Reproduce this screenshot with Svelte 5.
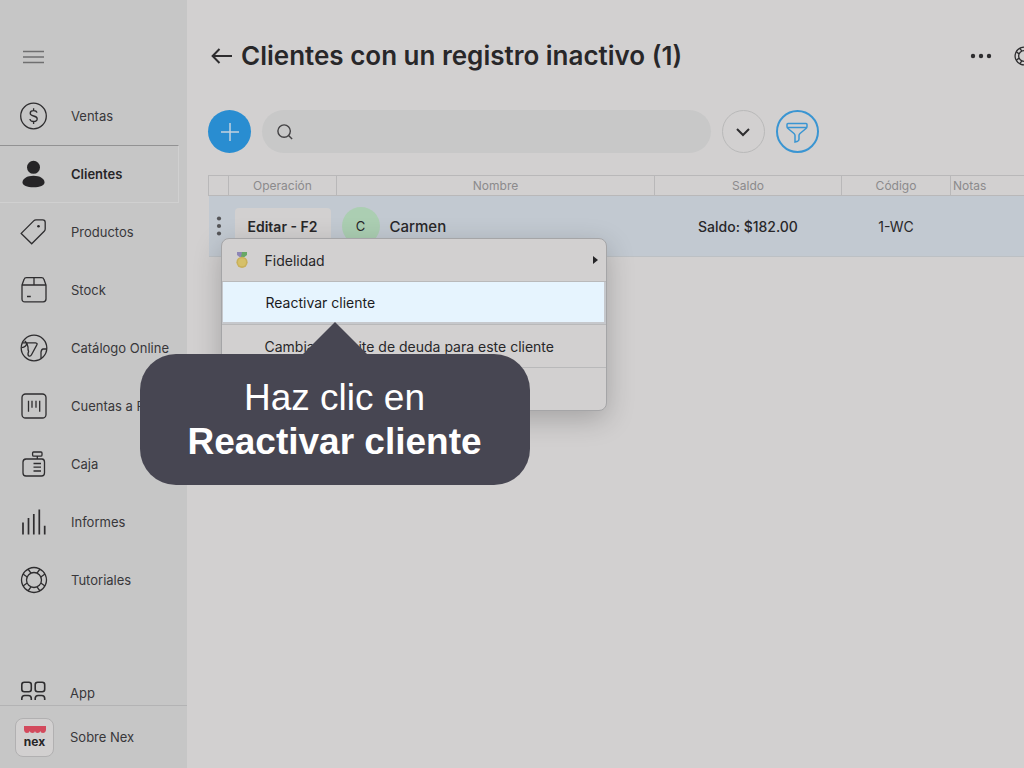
<script lang="ts">
  type Item = { id: string; label: string };

  const items: Item[] = [
    { id: 'ventas', label: 'Ventas' },
    { id: 'clientes', label: 'Clientes' },
    { id: 'productos', label: 'Productos' },
    { id: 'stock', label: 'Stock' },
    { id: 'catalogo', label: 'Catálogo Online' },
    { id: 'cuentas', label: 'Cuentas a Pagar' },
    { id: 'caja', label: 'Caja' },
    { id: 'informes', label: 'Informes' },
    { id: 'tutoriales', label: 'Tutoriales' }
  ];

  let active = $state('clientes');
  let search = $state('');
</script>

{#snippet ring()}
  <circle cx="14" cy="14" r="7.5" />
  <path d="M9 2.6 Q14 0.4 19 2.6 Q23.4 4.6 25.4 9 Q27.6 14 25.4 19 Q23.4 23.4 19 25.4 Q14 27.6 9 25.4 Q4.6 23.4 2.6 19 Q0.4 14 2.6 9 Q4.6 4.6 9 2.6Z" />
  <path d="M8 3l3 4.2M3 8l4.2 3M20 3l-3 4.2M25 8l-4.200 3M8 25l3-4.200M3 20l4.200-3M20 25l-3-4.200M25 20l-4.200-3" />
{/snippet}

{#snippet icon(id: string)}
  <svg class="icon" viewBox="0 0 28 28" aria-hidden="true">
    {#if id === 'ventas'}
      <circle cx="13.500" cy="14" r="12.800" />
      <path d="M17 10.600C16.600 9.200 15.400 8.600 13.600 8.600c-2 0-3.400 1-3.400 2.600 0 1.700 1.400 2.300 3.400 2.800s3.600 1.100 3.600 2.800c0 1.700-1.500 2.700-3.600 2.700-2.100 0-3.500-.9-3.700-2.500M13.600 6.200v2.400M13.600 19.500v2.500" />
    {:else if id === 'clientes'}
      <g class="solid">
        <circle cx="13.500" cy="7.300" r="6.500" />
        <path d="M2.500 22.500c0-4 4.500-6.800 11-6.800s11 2.800 11 6.800c0 2.900-4.500 4.800-11 4.800s-11-1.900-11-4.800z" />
      </g>
    {:else if id === 'productos'}
      <path d="M1.200 15.400 13.700 2.900Q14.700 1.900 16 1.900H22.700Q25.200 1.900 25.200 4.400V11Q25.200 12.300 24.200 13.300L11.700 25.800Z" />
      <circle class="dot" cx="18.500" cy="8.300" r="1.300" />
    {:else if id === 'stock'}
      <path d="M2 9 4 3.600Q4.600 1.700 6.500 1.700h15q1.900 0 2.500 1.900L26 9v14q0 2.800-2.800 2.800H4.800Q2 25.800 2 23zM2 9h24M14 1.700V9M7 20.500h3.800" />
    {:else if id === 'catalogo'}
      <circle cx="14" cy="14" r="12.800" />
      <path d="M2.500 8.800H15.500Q18 9.200 16.700 11.200L11.500 20.800Q10.500 22.800 8.700 21.900 7.300 21 8.600 17.500 7.800 15.500 8 13L6.800 9 4.800 7M6.800 9C6.800 11 5 13.500 1.700 13.700M26.700 15H23.200Q21.400 15.200 21 18.200V24" />
    {:else if id === 'cuentas'}
      <rect x="2" y="2" width="24" height="24" rx="3.600" />
      <path d="M8.500 8.700v11M12 8.700v7M16 8.700v7M19.700 8.700v11" />
    {:else if id === 'caja'}
      <path d="M13.500 2h7.500q1 0 1 1v2q0 1.200-1.200 1.200h-7q-1.200 0-1.200-1.200V3q0-1 .9-1zM17.300 6.200V9M14.500 9H6Q3 9.200 3 12v11q0 3 3 3h15.500q3 0 3-3V12q0-2.800-2.500-3z" />
      <path d="M13.500 13.500h7.500M13.500 17.200h7.500M13.500 21h7.500" />
    {:else if id === 'informes'}
      <path class="bars" d="M3 14.500v12M8.500 10v16.500M13.800 6v20.500M19.300 1.500v25M24.700 17.800v8.700" />
    {:else}
      {@render ring()}
    {/if}
  </svg>
{/snippet}

<div class="page">
  <aside>
    <button class="burger" aria-label="Menú">
      <svg width="22" height="14" viewBox="0 0 22 14"><path d="M1 1.500h21M1 7h21M1 12.500h21" /></svg>
    </button>

    <nav>
      {#each items as item}
        <a href="#{item.id}" class:active={active === item.id} onclick={() => (active = item.id)}>
          {@render icon(item.id)}
          <span>{item.label}</span>
        </a>
      {/each}
      <a href="#app" class="app">
        <svg width="28" height="19" viewBox="0 0 28 19" aria-hidden="true">
          <rect x="1.800" y="1.200" width="9.500" height="9.500" rx="2.500" />
          <rect x="15.200" y="1.200" width="9.500" height="9.500" rx="2.500" />
          <path d="M1.800 19v-1.500q0-3 3-3h3.500q3 0 3 3V19M15.200 19v-1.500q0-3 3-3h3.500q3 0 3 3V19" />
        </svg>
        <span>App</span>
      </a>
    </nav>

    <a href="#nex" class="about">
      <span class="logo">
        <svg width="22" height="8" viewBox="0 0 22 8" aria-hidden="true">
          <path d="M0 0h22v4q-.5 3-3 3-2.500 0-2.700-2Q16 7 13.500 7 11 7 11 5q0 2-2.500 2Q6 7 5.700 5 5.500 7 3 7 .5 7 0 4z" />
        </svg>
        <b>nex</b>
      </span>
      <span>Sobre Nex</span>
    </a>
  </aside>

  <main>
    <header>
      <button class="back" aria-label="Volver">
        <svg width="22" height="18" viewBox="0 0 22 18"><path d="M21 9H2M8.500 2 1.600 9l6.900 7" /></svg>
      </button>
      <h1>Clientes con un registro inactivo (1)</h1>
      <button class="more" aria-label="Más opciones">
        <svg width="22" height="6" viewBox="0 0 22 6"><circle cx="3" cy="3" r="2.200" /><circle cx="11" cy="3" r="2.200" /><circle cx="19" cy="3" r="2.200" /></svg>
      </button>
      <button class="help" aria-label="Ayuda">
        <svg width="20" height="20" viewBox="0 0 28 28">{@render ring()}</svg>
      </button>
    </header>

    <div class="toolbar">
      <button class="round add" aria-label="Agregar cliente">
        <svg width="20" height="20" viewBox="0 0 20 20"><path d="M10 1v18M1 10h18" /></svg>
      </button>
      <label class="search">
        <svg width="16" height="16" viewBox="0 0 18 18" aria-hidden="true"><circle cx="8" cy="8" r="7" /><path d="m13 13 4 4" /></svg>
        <input type="text" aria-label="Buscar" bind:value={search} />
      </label>
      <button class="round expand" aria-label="Mostrar más">
        <svg width="16" height="10" viewBox="0 0 16 10"><path d="m2 2 6 6 6-6" /></svg>
      </button>
      <button class="round filter" aria-label="Filtrar">
        <svg width="24" height="24" viewBox="0 0 24 24">
          <path d="M3 3.500h18q1 0 1 1v2q0 1.200-1 2L15 13.500q-1 1-1 2v3.500q0 1.500-1.300 2.200L10 22V15.500q0-1-1-2L3 8.500q-1-.8-1-2v-2q0-1 1-1zM2.500 7.500h19" />
        </svg>
      </button>
    </div>

    <table>
      <colgroup>
        <col class="c-handle" /><col class="c-op" /><col class="c-name" /><col class="c-balance" /><col class="c-code" /><col />
      </colgroup>
      <thead>
        <tr>
          <th aria-label="Acciones"></th>
          <th>Operación</th>
          <th>Nombre</th>
          <th>Saldo</th>
          <th>Código</th>
          <th class="notes">Notas</th>
        </tr>
      </thead>
      <tbody>
        <tr>
          <td class="handle">
            <button class="dots" aria-label="Acciones de Carmen">
              <svg width="6" height="20" viewBox="0 0 6 20"><circle cx="3" cy="2.500" r="2.100" /><circle cx="3" cy="10" r="2.100" /><circle cx="3" cy="17.500" r="2.100" /></svg>
            </button>
            <div class="menu" role="menu">
              <button role="menuitem">
                <svg class="medal" width="14" height="16" viewBox="0 0 14 16" aria-hidden="true">
                  <path fill="#8d86b5" d="M2 0h6v5H4.500L2 3z" />
                  <path fill="#68a866" d="M7 0h5v3L9.500 5H6z" />
                  <circle cx="7" cy="10.300" r="5.600" fill="#c9b05a" />
                  <circle cx="7" cy="10.300" r="4" fill="#d6c069" />
                </svg>
                <span>Fidelidad</span>
                <svg class="arrow" width="5" height="8" viewBox="0 0 5 8" aria-hidden="true"><path d="M0 0l5 4-5 4z" /></svg>
              </button>
              <div class="current">
                <button role="menuitem"><span>Reactivar cliente</span></button>
                <div class="callout">
                  Haz clic en<br /><strong>Reactivar cliente</strong>
                </div>
              </div>
              <button role="menuitem"><span>Cambiar el límite de deuda para este cliente</span></button>
              <button role="menuitem" aria-label="Otra acción"></button>
            </div>
          </td>
          <td><button class="edit">Editar - F2</button></td>
          <td>
            <div class="person"><span class="avatar">C</span><span>Carmen</span></div>
          </td>
          <td class="balance">Saldo: $182.00</td>
          <td class="code">1-WC</td>
          <td></td>
        </tr>
      </tbody>
    </table>
  </main>
</div>

<style>
  :global(body) {
    background: #d2d0d0;
  }

  .page {
    display: flex;
    min-height: 100vh;
    font-family: Inter, 'Liberation Sans', sans-serif;
    font-size: 13px;
    color: #282729;
    background: #d2d0d0;
  }

  button {
    display: flex;
    align-items: center;
    justify-content: center;
    padding: 0;
    border: 0;
    background: none;
    font: inherit;
    color: inherit;
    cursor: pointer;
  }

  svg {
    flex: none;
    fill: none;
    stroke: #2e2d2f;
    stroke-width: 1.3;
  }

  aside {
    display: flex;
    flex-direction: column;
    flex: none;
    width: 187px;
    background: #c6c6c6;
  }

  .burger {
    width: 22px;
    height: 22px;
    margin: 46px 0 19px 22px;
  }

  .burger svg {
    stroke: #6f6f70;
    stroke-width: 1.6;
  }

  nav {
    display: flex;
    flex-direction: column;
    flex: 1;
  }

  a {
    display: flex;
    align-items: center;
    gap: 23px;
    color: #38373a;
    text-decoration: none;
  }

  nav a {
    box-sizing: border-box;
    height: 58px;
    margin-right: 8px;
    padding-left: 20px;
    white-space: nowrap;
  }

  .icon {
    width: 28px;
    height: 28px;
  }

  .solid,
  .dot {
    fill: #262527;
    stroke: none;
  }

  .bars {
    stroke-width: 1.7;
  }

  .active {
    border: 1px solid #d0d0d0;
    border-left: 0;
    border-top-color: #929293;
    font-weight: 600;
    color: #262527;
  }

  nav .app {
    height: 24px;
    margin-top: auto;
    gap: 22px;
  }

  .app svg {
    margin-bottom: 5px;
    align-self: flex-end;
    stroke-width: 1.6;
  }

  .about {
    height: 63px;
    padding: 0 0 0 15px;
    gap: 16px;
    border-top: 1px solid #b3b3b4;
    box-sizing: border-box;
  }

  .about .logo {
    display: flex;
    flex-direction: column;
    align-items: center;
    justify-content: center;
    gap: 2px;
    width: 37px;
    height: 37px;
    border: 1px solid #b1b0b1;
    border-radius: 8px;
    background: #d2d0d0;
  }

  .logo svg {
    fill: #d34a5d;
    stroke: none;
  }

  .logo b {
    font-size: 12px;
    line-height: 12px;
    color: #262527;
  }

  main {
    flex: 1;
    min-width: 0;
    padding-left: 21px;
  }

  header {
    display: flex;
    align-items: center;
    height: 32px;
    margin-top: 40px;
    overflow: hidden;
  }

  .back {
    margin: 0 8px 0 3px;
  }

  .back svg {
    stroke-width: 2;
  }

  h1 {
    flex: 1;
    margin: 0;
    font-size: 26px;
    font-weight: 600;
    line-height: 32px;
    white-space: nowrap;
  }

  .more svg {
    fill: #2e2d2f;
    stroke: none;
  }

  .help {
    margin: 0 -10px 0 22px;
  }

  .help svg {
    stroke-width: 1.8;
  }

  .toolbar {
    display: flex;
    gap: 11px;
    margin: 38px 0 22px;
  }

  .round {
    box-sizing: border-box;
    flex: none;
    width: 43px;
    height: 43px;
    border-radius: 50%;
  }

  .add {
    background: #298dd1;
  }

  .add svg {
    stroke: #c4d2de;
    stroke-width: 1.5;
  }

  .search {
    display: flex;
    align-items: center;
    gap: 10px;
    box-sizing: border-box;
    width: 55%;
    padding: 0 15px;
    border-radius: 22px;
    background: #c8c8c8;
  }

  .search svg {
    stroke: #444345;
    stroke-width: 1.6;
  }

  input {
    flex: 1;
    min-width: 0;
    border: 0;
    outline: 0;
    background: none;
    font: inherit;
  }

  .expand {
    border: 1px solid #b9b9b9;
  }

  .expand svg {
    stroke-width: 2;
  }

  .filter {
    border: 2px solid #3a95d2;
  }

  .filter svg {
    stroke: #3a95d2;
    stroke-width: 1.5;
  }

  table {
    width: 100%;
    table-layout: fixed;
    border-collapse: collapse;
  }

  .c-handle {
    width: 20px;
  }

  .c-op {
    width: 108px;
  }

  .c-name {
    width: 318px;
  }

  .c-balance {
    width: 187px;
  }

  .c-code {
    width: 109px;
  }

  th {
    height: 19px;
    padding: 0;
    border: 1px solid #b9b8b9;
    border-right: 0;
    font-size: 12px;
    font-weight: 400;
    line-height: 16px;
    color: #8b8a8c;
  }

  .notes {
    padding-left: 2px;
    text-align: left;
  }

  td {
    height: 60px;
    padding: 0;
    border-bottom: 1px solid #bcc0c4;
    background: #c2c9d1;
    text-align: center;
  }

  .handle {
    position: relative;
  }

  .dots {
    margin: 0 auto;
  }

  .dots svg {
    fill: #555558;
    stroke: none;
  }

  .edit {
    width: 96px;
    height: 36px;
    margin: 0 auto;
    border-radius: 4px;
    background: #d2d0d0;
    font-size: 14px;
    font-weight: 600;
  }

  .person {
    display: flex;
    align-items: center;
    gap: 10px;
    padding-left: 5px;
    font-size: 15px;
    font-weight: 500;
  }

  .avatar {
    width: 38px;
    border-radius: 50%;
    background: #abceb2;
    font-size: 13px;
    font-weight: 400;
    line-height: 38px;
  }

  .balance {
    font-size: 14px;
    font-weight: 500;
  }

  .code {
    font-size: 14px;
  }

  .menu {
    position: absolute;
    top: 42px;
    left: 12px;
    z-index: 1;
    width: 384px;
    border: 1px solid #a5a5a7;
    border-radius: 8px;
    background: #d2d0d0;
    box-shadow: 0 8px 28px rgba(0, 0, 0, 0.22);
    font-size: 14px;
  }

  .menu button {
    box-sizing: border-box;
    width: 100%;
    height: 43px;
    padding: 0 8px 0 43px;
    border-bottom: 1px solid #b9b9ba;
    justify-content: flex-start;
    white-space: nowrap;
  }

  .menu > button:last-child {
    height: 42px;
    border-bottom: 0;
  }

  .menu .medal {
    margin: 0 16px 0 -30px;
    stroke: none;
  }

  .menu .arrow {
    margin-left: auto;
    fill: #262527;
    stroke: none;
  }

  .current {
    position: relative;
    padding: 0 2px 2px 1px;
    border-bottom: 1px solid #b9b9ba;
    background: #c6c8cc;
  }

  .current button {
    height: 40px;
    border: 0;
    background: #e6f4fe;
    color: #1c1c1e;
  }

  .callout {
    position: absolute;
    top: 72px;
    left: -82px;
    box-sizing: border-box;
    width: 390px;
    padding: 22px 0 21px;
    border-radius: 36px;
    background: #474652;
    color: #fff;
    font: 37px/44px 'Liberation Sans', Arial, sans-serif;
    text-align: center;
  }

  .callout::before {
    content: '';
    position: absolute;
    bottom: 100%;
    left: 50%;
    margin-left: -32px;
    border: 32px solid transparent;
    border-top: 0;
    border-bottom-color: #474652;
  }
</style>
